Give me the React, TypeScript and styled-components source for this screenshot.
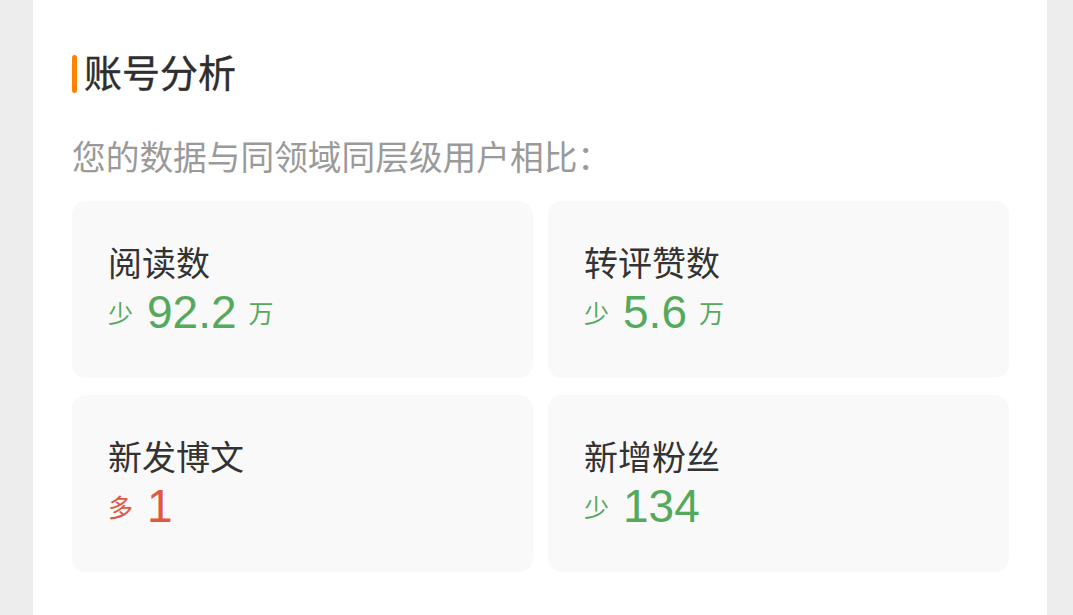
import React from 'react';
import styled, { createGlobalStyle } from 'styled-components';

type Trend = 'less' | 'more';

interface Stat {
  label: string;
  trend: Trend;
  value: string;
  unit?: string;
}

const stats: Stat[] = [
  { label: '阅读数', trend: 'less', value: '92.2', unit: '万' },
  { label: '转评赞数', trend: 'less', value: '5.6', unit: '万' },
  { label: '新发博文', trend: 'more', value: '1' },
  { label: '新增粉丝', trend: 'less', value: '134' },
];

const trendColor: Record<Trend, string> = {
  less: '#55a95c',
  more: '#e0583f',
};

const App: React.FC = () => {
  return (
    <>
      <GlobalStyle />
      <Page>
        <Panel>
          <Title>账号分析</Title>
          <Subtitle>您的数据与同领域同层级用户相比：</Subtitle>
          <Grid>
            {stats.map((s) => (
              <Card key={s.label}>
                <Label>{s.label}</Label>
                <ValueRow $trend={s.trend}>
                  <Small>{s.trend === 'less' ? '少' : '多'}</Small>
                  <Number>{s.value}</Number>
                  {s.unit && <Small>{s.unit}</Small>}
                </ValueRow>
              </Card>
            ))}
          </Grid>
        </Panel>
      </Page>
    </>
  );
};

export default App;

// Styled Components

const GlobalStyle = createGlobalStyle`
  html, body {
    margin: 0;
    padding: 0;
    background: #ededed;
    font-family: "Noto Sans CJK SC", "Noto Sans", sans-serif;
  }
`;

const Page = styled.div`
  display: flex;
  padding-left: 33px;
  min-height: 615px;
`;

const Panel = styled.div`
  width: 1014px;
  min-height: 615px;
  background: #fff;
  box-sizing: border-box;
  padding: 51px 38px 40px 39px;
`;

const Title = styled.h2`
  position: relative;
  margin: 0;
  padding-left: 12px;
  font-size: 38px;
  line-height: 40px;
  font-weight: 400;
  color: #2e2e2e;
  -webkit-text-stroke: 0.4px #2e2e2e;

  &::before {
    content: '';
    position: absolute;
    left: 0;
    top: 4px;
    width: 5px;
    height: 38px;
    border-radius: 3px;
    background: #ff8200;
  }
`;

const Subtitle = styled.p`
  margin: 45px 0 25px;
  font-size: 33.7px;
  line-height: 40px;
  color: #9a9a9a;
`;

const Grid = styled.div`
  display: grid;
  grid-template-columns: 1fr 1fr;
  grid-auto-rows: 177px;
  column-gap: 15px;
  row-gap: 17px;
`;

const Card = styled.div`
  background: #f9f9f9;
  border-radius: 14px;
  padding: 41px 36px 0;
`;

const Label = styled.div`
  font-size: 34px;
  line-height: 40px;
  color: #333;
`;

const ValueRow = styled.div<{ $trend: Trend }>`
  display: flex;
  align-items: center;
  gap: 12px;
  margin-top: 5px;
  height: 50px;
  color: ${(p) => trendColor[p.$trend]};
`;

const Small = styled.span`
  font-size: 25px;
  line-height: 30px;
`;

const Number = styled.span`
  margin-left: 2px;
  font-family: "Liberation Sans", Arial, sans-serif;
  font-size: 46px;
  line-height: 50px;
`;
